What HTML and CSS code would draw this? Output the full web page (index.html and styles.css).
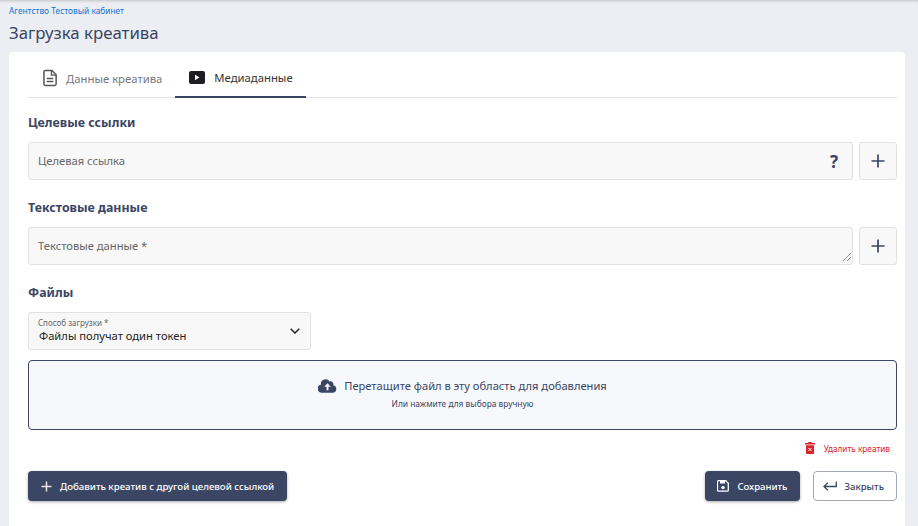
FILE: index.html
```html
<!DOCTYPE html>
<html lang="ru">
<head>
<meta charset="utf-8">
<title>Загрузка креатива</title>
<link rel="stylesheet" href="styles.css">
</head>
<body>
<div class="page">
  <header class="head">
    <a class="crumb">Агентство Тестовый кабинет</a>
    <h1 class="title">Загрузка креатива</h1>
  </header>
  <main class="card">
    <nav class="tabs">
      <div class="tab">
        <svg class="tab-icon" viewBox="0 0 16 18" width="15" height="18"><path d="M2.5 1h7L14 5.500V15.500a1.500 1.500 0 0 1-1.500 1.500H2.500A1.500 1.500 0 0 1 1 15.500V2.500A1.500 1.500 0 0 1 2.500 1z" fill="none" stroke="#555" stroke-width="1.600"/><path d="M9 1v5h5" fill="none" stroke="#555" stroke-width="1.400"/><path d="M4 9.500h7M4 12.800h7" stroke="#555" stroke-width="1.500"/></svg>
        <span>Данные креатива</span>
      </div>
      <div class="tab tab-active">
        <svg class="tab-icon" viewBox="0 0 16 13" width="16" height="13"><rect width="16" height="13" rx="2" fill="#1e1e22"/><path d="M6 3.700v5.600l4.500-2.800z" fill="#fff"/></svg>
        <span>Медиаданные</span>
      </div>
    </nav>

    <section class="group group-links">
      <h2 class="group-title">Целевые ссылки</h2>
      <div class="row">
        <div class="field">
          <span class="placeholder">Целевая ссылка</span>
          <span class="hint">?</span>
        </div>
        <button class="add" type="button"><svg viewBox="0 0 14 14" width="14" height="14"><path d="M7 0.500v13M0.500 7h13" stroke="#3a4664" stroke-width="1.700"/></svg></button>
      </div>
    </section>

    <section class="group group-text">
      <h2 class="group-title">Текстовые данные</h2>
      <div class="row">
        <div class="field field-area">
          <span class="placeholder">Текстовые данные *</span>
          <svg class="resize" viewBox="0 0 8 8" width="8" height="8"><path d="M0 8L8 0M4 8L8 4" stroke="#777" stroke-width="0.800"/></svg>
        </div>
        <button class="add" type="button"><svg viewBox="0 0 14 14" width="14" height="14"><path d="M7 0.500v13M0.500 7h13" stroke="#3a4664" stroke-width="1.700"/></svg></button>
      </div>
    </section>

    <section class="group group-files">
      <h2 class="group-title">Файлы</h2>
      <div class="select">
        <div class="select-text">
          <span class="select-label">Способ загрузки *</span>
          <span class="select-value">Файлы получат один токен</span>
        </div>
        <svg viewBox="0 0 10 6" width="10" height="6"><path d="M0.700 0.700L5 5l4.300-4.300" fill="none" stroke="#222" stroke-width="1.500"/></svg>
      </div>
      <div class="drop">
        <div class="drop-main">
          <svg viewBox="0 0 20 14" width="19" height="14"><path d="M16.100 6.100A3 3 0 0 0 12.300 2.300 5 5 0 0 0 3.100 5.700 4.200 4.200 0 0 0 4.500 14H15.500a4 4 0 0 0 .6-7.900z" fill="#3a4664"/><path d="M10 4.200L6.500 7.800H9V11.500h2V7.800h2.500z" fill="#f7f8fb"/></svg>
          <span>Перетащите файл в эту область для добавления</span>
        </div>
        <div class="drop-sub">Или нажмите для выбора вручную</div>
      </div>
    </section>

    <div class="remove">
      <svg viewBox="0 0 10 12" width="10" height="12"><path d="M3.500 0h3l.5 1H10v1.500H0V1h3z" fill="#d8232a"/><path d="M1 3.300h8V11a1 1 0 0 1-1 1H2a1 1 0 0 1-1-1z" fill="#d8232a"/><path d="M3.500 6l3 3M6.500 6l-3 3" stroke="#fff" stroke-width="1"/></svg>
      <span>Удалить креатив</span>
    </div>

    <footer class="actions">
      <button class="btn btn-primary btn-add" type="button">
        <svg viewBox="0 0 11 11" width="11" height="11"><path d="M5.500 0.500v10M0.500 5.500h10" stroke="#e6e8ee" stroke-width="1.500"/></svg>
        <span>Добавить креатив с другой целевой ссылкой</span>
      </button>
      <div class="actions-right">
        <button class="btn btn-primary btn-save" type="button">
          <svg viewBox="0 0 12 12" width="12" height="12"><path d="M1.500 0.700h7.300l2.500 2.500v7a1 1 0 0 1-1 1h-8.800a1 1 0 0 1-1-1v-8.500a1 1 0 0 1 1-1z" fill="none" stroke="#fff" stroke-width="1.300"/><path d="M3 1h5v2.500H3z" fill="#fff"/><circle cx="6" cy="7.600" r="1.700" fill="#fff"/></svg>
          <span>Сохранить</span>
        </button>
        <button class="btn btn-ghost" type="button">
          <svg viewBox="0 0 14 10" width="14" height="10"><path d="M13.300 0.500V5.500H1.500M4.800 1.800L1 5.500l3.800 3.700" fill="none" stroke="#3a4664" stroke-width="1.300"/></svg>
          <span>Закрыть</span>
        </button>
      </div>
    </footer>
  </main>
</div>
</body>
</html>
```

FILE: styles.css
```css
* { box-sizing: border-box; }
html, body { margin: 0; height: 100%; }
body {
  background: #eceef3;
  font-family: "Noto Sans", "Open Sans", sans-serif;
  color: #3a4664;
  overflow: hidden;
}
.page {
  height: 526px;
  padding: 0 13px 0 9px;
  display: flex;
  flex-direction: column;
  box-shadow: inset 0 3px 3px -2px rgba(0, 0, 0, 0.18);
}
.head { height: 52px; padding-top: 5px; }
.crumb {
  display: block;
  font-size: 8.350px;
  line-height: 12px;
  color: #1273d4;
}
.title {
  margin: 5px 0 0;
  font-size: 16.800px;
  line-height: 22px;
  font-weight: 400;
  color: #3a4664;
}
.card {
  flex: 1;
  background: #fff;
  border-radius: 4px 4px 0 0;
  padding: 0 8px 0 19px;
}
.tabs {
  display: flex;
  height: 46px;
  border-bottom: 1px solid #e3e4e7;
}
.tab {
  display: flex;
  align-items: center;
  gap: 8px;
  height: 45px;
  padding: 7px 13px 0 15px;
  font-size: 11.300px;
  color: #76787d;
}
.tab-active {
  height: 46px;
  gap: 9px;
  color: #333;
  border-bottom: 2px solid #3a4664;
  padding: 7px 13px 0 14px;
}
.group-title {
  margin: 0;
  padding-top: 1px;
  font-size: 12.400px;
  line-height: 18px;
  font-weight: 700;
  color: #3a4664;
}
.group-links { margin-top: 15px; }
.group-text { margin-top: 18px; }
.group-files { margin-top: 18px; }
.row {
  display: flex;
  gap: 6px;
  margin-top: 10px;
}
.field {
  position: relative;
  flex: 1;
  height: 38px;
  display: flex;
  align-items: center;
  justify-content: space-between;
  padding: 0 14px 0 9px;
  background: #f8f8f8;
  border: 1px solid #e2e2e2;
  border-radius: 3px;
  font-size: 11.200px;
  color: #666;
}
.field-area { align-items: flex-start; padding-top: 10px; }
.placeholder { line-height: 16px; }
.hint {
  font-size: 17px;
  font-weight: 700;
  color: #3a4664;
}
.resize { position: absolute; right: 1px; bottom: 3px; }
.add {
  width: 38px;
  height: 38px;
  padding: 0;
  display: flex;
  align-items: center;
  justify-content: center;
  background: #f8f8f8;
  border: 1px solid #e2e2e2;
  border-radius: 3px;
}
.select {
  width: 283px;
  height: 38px;
  margin-top: 10px;
  padding: 0 10px 0 9px;
  display: flex;
  align-items: center;
  justify-content: space-between;
  background: #f8f8f8;
  border: 1px solid #e2e2e2;
  border-radius: 3px;
}
.select-text { display: flex; flex-direction: column; }
.select-label { font-size: 8px; line-height: 10px; color: #666; }
.select-value { font-size: 11.200px; line-height: 16px; color: #222; margin-left: 1px; }
.drop {
  height: 70px;
  margin-top: 10px;
  display: flex;
  flex-direction: column;
  align-items: center;
  justify-content: center;
  background: #f6f8fb;
  border: 1px solid #3a4664;
  border-radius: 4px;
  padding-bottom: 3px;
}
.drop-main {
  display: flex;
  align-items: center;
  gap: 7px;
  font-size: 11.150px;
  line-height: 18px;
}
.drop-sub { font-size: 8.400px; line-height: 12px; margin-top: 3px; }
.remove {
  display: flex;
  justify-content: flex-end;
  align-items: center;
  gap: 9px;
  height: 12px;
  margin-top: 12px;
  padding-right: 7px;
  font-size: 8.250px;
  color: #d8232a;
}
.actions {
  display: flex;
  justify-content: space-between;
  margin-top: 17px;
}
.actions-right { display: flex; gap: 13px; }
.btn {
  height: 30px;
  display: flex;
  align-items: center;
  border-radius: 4px;
  font: inherit;
  font-size: 9.550px;
  font-weight: 500;
}
.btn-primary {
  gap: 8px;
  padding: 0 13px;
  background: #3a4664;
  border: 0;
  color: #fff;
  box-shadow: 0 1px 3px rgba(0, 0, 0, 0.35);
}
.btn-add { font-size: 9.630px; }
.btn-save { gap: 8px; padding: 0 13px 0 12px; }
.btn-ghost {
  gap: 7px;
  padding: 0 12px 0 9px;
  background: #fff;
  border: 1px solid #a3a9b8;
  color: #3a4664;
}
```
